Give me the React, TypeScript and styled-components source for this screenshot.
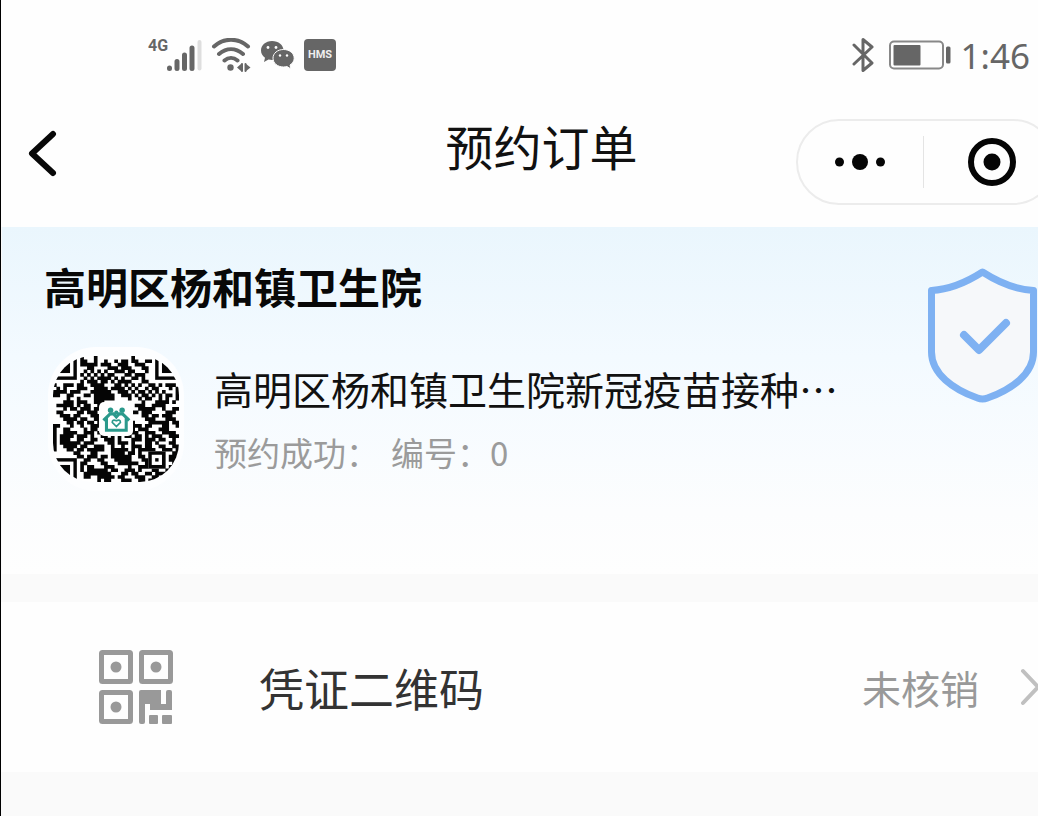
import React from "react";
import styled, { createGlobalStyle } from "styled-components";

const GlobalStyle = createGlobalStyle`
  * { box-sizing: border-box; }
  html, body, #root { min-height: 100%; }
  body {
    margin: 0;
    background: #fafafa;
    font-family: "Noto Sans CJK SC", "Noto Sans", sans-serif;
    color: #111;
    overflow-x: hidden;
  }
  button { font: inherit; color: inherit; background: none; border: 0; padding: 0; cursor: pointer; }
  svg { display: block; flex: none; }
`;

const Screen = styled.div`
  min-height: 100vh;
  border-left: 1px solid #000;
  overflow: hidden;
`;

const StatusBar = styled.header`
  display: flex;
  justify-content: space-between;
  align-items: center;
  height: 110px;
  padding: 0 8px 0 147px;
  background: #fefefe;
  color: #666;
`;

const StatusGroup = styled.div<{ $gap: number }>`
  display: flex;
  align-items: center;
  gap: ${(p) => p.$gap}px;
`;

const Signal = styled.div`
  display: flex;
  align-items: flex-start;
`;

const Network = styled.span`
  width: 18px;
  font: 700 16px/16px Roboto, sans-serif;
`;

const HmsBadge = styled.span`
  display: grid;
  place-items: center;
  width: 32px;
  height: 32px;
  border-radius: 4px;
  background: #666;
  color: #eee;
  font: 700 11px/12px Roboto, sans-serif;
`;

const Clock = styled.time`
  padding-top: 2px;
  font: 400 35px/40px "Noto Sans", sans-serif;
`;

const NavBar = styled.nav`
  display: grid;
  grid-template-columns: 1fr auto 1fr;
  align-items: start;
  height: 117px;
  background: #fefefe;
`;

const BackButton = styled.button`
  justify-self: start;
  padding: 20px 26px;
`;

const PageTitle = styled.h1`
  margin: 0;
  padding-left: 44px;
  font-size: 48px;
  font-weight: 400;
  line-height: 70px;
`;

const Capsule = styled.div`
  justify-self: end;
  display: flex;
  align-items: center;
  width: 260px;
  height: 86px;
  margin: 9px -18px 0 0;
  border: 2px solid #ececec;
  border-radius: 43px;
`;

const CapsuleButton = styled.button`
  display: grid;
  place-items: center;
  flex: 1;
  height: 52px;
  & + & { border-left: 1px solid #e4e4e4; padding-left: 6px; }
`;

const Hero = styled.section`
  display: flex;
  justify-content: space-between;
  align-items: flex-start;
  height: 347px;
  margin-left: 1px;
  padding: 28px 0 0 42px;
  background: linear-gradient(#eaf6fd 0, #f3faff 130px, #fcfdfe 285px, #fefefe);
`;

const ClinicName = styled.h2`
  margin: 0;
  font-size: 42px;
  font-weight: 700;
  line-height: 62px;
  color: #080808;
`;

const Booking = styled.div`
  display: flex;
  align-items: center;
  gap: 30px;
  padding: 30px 0 0 4px;
`;

const QrFrame = styled.div`
  display: grid;
  place-items: center;
  width: 136px;
  height: 144px;
  border-radius: 48px;
  background: #fdfeff;
`;

const BookingTitle = styled.p`
  margin: 0;
  font-size: 39px;
  line-height: 64px;
`;

const BookingStatus = styled.p`
  display: flex;
  gap: 12px;
  margin: 0;
  font-size: 33px;
  line-height: 64px;
  color: #9b9b9b;
`;

const BookingText = styled.div`
  padding-top: 2px;
`;

const ShieldBox = styled.div`
  padding-top: 11px;
`;

const VoucherRow = styled.button`
  display: flex;
  align-items: center;
  width: 100%;
  height: 170px;
  margin-top: 28px;
  padding: 0 0 0 97px;
  background: #fefefe;
  text-align: left;
`;

const VoucherLabel = styled.span`
  flex: 1;
  padding: 2px 0 0 85px;
  font-size: 45px;
  line-height: 66px;
  color: #333;
`;

const VoucherState = styled.span`
  padding-right: 41px;
  font-size: 39px;
  line-height: 58px;
  color: #999;
`;

const QR_ROWS = [
  "0000000010001000000000010000000000000",
  "0000000011001001001011011001100000000",
  "0000000011111011100111001110000000000",
  "0000000000110000111011100011000000000",
  "0000000001010101001110110001000000000",
  "0000000010101010110001101110000000000",
  "0000000001010111101010011010000000000",
  "0000000010111011010111100011000000000",
  "1001110110011110001101010100110101110",
  "0101000111001111011110101001011000101",
  "1111011100011111100111010110101010001",
  "1100110001101111110011101011010101101",
  "0000100100001111110000100101100101001",
  "0001110111001110000000000010001111010",
  "0111110101100100000000001110011110000",
  "0001011011101100000000000111110010011",
  "0110000110111000000000011011100001110",
  "0011101100011110000000000011011011100",
  "0001111011001110000000000001110001110",
  "0000110110110110000000010000111111011",
  "1100010010011100000000011101100011001",
  "1001100001011000000000010111000111000",
  "1001111001110110000000111001110011110",
  "1011110111010011010101101101011100111",
  "1011100110011001110100011101110110010",
  "1011111101110000110111010001101000110",
  "1001111011001110010010011101100110011",
  "1000110110111110011111010111110011101",
  "0000001100011000011110110100111110011",
  "0000000110111011011111100110100010111",
  "0000000001100110001111100011101010110",
  "0000000011000011000111111001100010011",
  "0000000010110001110000100111111110110",
  "0000000010111111011001110100011001100",
  "0000000001111111100011011001101111000",
  "0000000001100111110110001110011010000",
  "0000000000000101100011100110110000000",
];

const QR_PATH = QR_ROWS.map((row, y) =>
  Array.from(row.matchAll(/1+/g), (run) => {
    const w = run[0].length + 0.08;
    return `M${run.index} ${y}h${w}v1.08h-${w}z`;
  }).join("")
).join("");

const FINDERS = [[0, 0], [30, 0], [0, 30]];

function ClinicQr() {
  return (
    <svg width="126" height="126" viewBox="0 0 37 37" role="img" aria-label="二维码">
      <clipPath id="qr-round"><rect width="37" height="37" rx="11.500" /></clipPath>
      <g clipPath="url(#qr-round)">
        <rect width="37" height="37" fill="#fff" />
        <path d={QR_PATH} fill="#050505" />
        {FINDERS.map(([x, y]) => (
          <g key={`${x}-${y}`} transform={`translate(${x} ${y})`}>
            <rect x=".5" y=".5" width="6" height="6" fill="#fff" stroke="#050505" />
            <rect x="2" y="2" width="3" height="3" fill="#050505" />
          </g>
        ))}
        <rect x="28" y="28" width="5" height="5" fill="#fff" />
        <rect x="28.500" y="28.500" width="4" height="4" fill="#fff" stroke="#050505" />
        <rect x="30" y="30" width="1" height="1" fill="#050505" />
        <rect x="13.500" y="13.500" width="10" height="10" rx="1.500" fill="#fff" />
        <g fill="none" stroke="#2b9a8c" strokeWidth=".9">
          <path d="M15.700 18.200v3.600h5.800v-3.600M14.800 18.900l2-1.900h1l.8.900.8-.9h1l2 1.900" />
          <path d="M18.600 20.700l-1.200-1.200q0-1 1.200-.5 1.200-.5 1.200.5z" strokeWidth=".5" />
        </g>
        <g fill="#2b9a8c"><circle cx="16.900" cy="15.900" r=".8" /><circle cx="20.300" cy="15.900" r=".8" /><circle cx="18.600" cy="16.600" r=".6" /></g>
      </g>
    </svg>
  );
}

function SignalBars() {
  return (
    <svg width="36" height="34" viewBox="0 0 36 34" strokeWidth="5" strokeLinecap="round" stroke="#666">
      <path d="M3.500 30v.5M11 23.500v7M18.500 17v13.500M26 10v20.500" />
      <path d="M33.500 4v26.500" stroke="#dedede" strokeWidth="4" />
    </svg>
  );
}

function Wifi() {
  return (
    <svg width="40" height="34" viewBox="0 0 40 34" fill="none" stroke="#666" strokeWidth="4" strokeLinecap="round">
      <path d="M3 8.500C13-.5 27-.5 37 8.500M8 16c7.500-6.500 16.500-6.500 24 0M13.500 22.500c4-3.500 9-3.500 13 0" />
      <circle cx="19.500" cy="29.500" r="3.200" fill="#666" stroke="none" />
      <path d="M26 29.500l4.500-4v8zM39.500 29.500l-5-4v8z" fill="#666" stroke="none" />
      <path d="M31 26v7M34.500 26v7" strokeWidth="2" />
    </svg>
  );
}

function Chat() {
  return (
    <svg width="35" height="30" viewBox="0 0 35 30">
      <path d="M12 1C5.500 1 1 5.300 1 10.500c0 3 1.500 5.500 4 7.200L4 22l4.500-2.500c1.200.3 2.300.5 3.500.5 6.500 0 11.500-4 11.500-9.500S18.500 1 12 1z" fill="#666" />
      <path d="M23.500 9.500c-6 0-10.500 3.800-10.500 8.700s4.500 8.800 10.500 8.800c1.200 0 2.300-.2 3.400-.5L31 29l-1-4c2.600-1.600 4.200-4 4.200-6.800 0-4.900-4.700-8.700-10.700-8.700z" fill="#666" stroke="#fefefe" />
      <g fill="#fefefe"><circle cx="8" cy="7.500" r="1.400" /><circle cx="16" cy="7.500" r="1.400" /><circle cx="20" cy="15.500" r="1.200" /><circle cx="27" cy="15.500" r="1.200" /></g>
    </svg>
  );
}

function Bluetooth() {
  return (
    <svg width="27" height="36" viewBox="0 0 27 36" fill="none" stroke="#666" strokeWidth="3" strokeLinejoin="round" strokeLinecap="round">
      <path d="M2 8l18 18-9 7.500v-31L20 10 2 27" />
    </svg>
  );
}

function Battery() {
  return (
    <svg width="62" height="30" viewBox="0 0 62 30">
      <rect x="1" y="1.500" width="53" height="27" rx="4" fill="none" stroke="#888" strokeWidth="2" />
      <rect x="4.500" y="5" width="27" height="20.500" rx="1" fill="#666" />
      <rect x="57" y="6.500" width="4.500" height="17" rx="1.500" fill="#666" />
    </svg>
  );
}

function Shield() {
  return (
    <svg width="111" height="138" viewBox="0 0 111 138" fill="none" stroke="#7eb1f2" strokeWidth="7" strokeLinecap="round" strokeLinejoin="round">
      <path d="M55.500 6C40 16 22 23.500 4.500 24.500V86c0 22 22 37.500 46 46q5 2 10 0c24-8.500 46-24 46-46V24.500C89 23.500 71 16 55.500 6z" fill="#f6f8fa" />
      <path d="M37 69l15 15 27-27" strokeWidth="8" />
    </svg>
  );
}

function VoucherIcon() {
  return (
    <svg width="76" height="76" viewBox="0 0 76 76" fill="#999">
      {[[0, 0], [40, 0], [0, 40]].map(([x, y]) => (
        <g key={`${x}-${y}`} transform={`translate(${x} ${y})`}>
          <rect x="3.500" y="3.500" width="29" height="29" rx="1" fill="none" stroke="#999" strokeWidth="5" />
          <circle cx="18" cy="18" r="5.500" />
        </g>
      ))}
      <path d="M43 41h20v14h5V43q0-2 2-2h2q2 0 2 2v18H52v-6h-5v18q0 2-2 2h-2q-2 0-2-2V43q0-2 2-2z" />
      <rect x="51" y="66" width="9" height="9" rx="1" />
      <rect x="64" y="66" width="10" height="9" rx="1" />
    </svg>
  );
}

export default function App() {
  return (
    <Screen>
      <GlobalStyle />
      <StatusBar>
        <StatusGroup $gap={9}>
          <Signal>
            <Network>4G</Network>
            <SignalBars />
          </Signal>
          <Wifi />
          <Chat />
          <HmsBadge>HMS</HmsBadge>
        </StatusGroup>
        <StatusGroup $gap={10}>
          <Bluetooth />
          <Battery />
          <Clock>1:46</Clock>
        </StatusGroup>
      </StatusBar>
      <NavBar>
        <BackButton aria-label="返回">
          <svg width="30" height="48" viewBox="0 0 30 48" fill="none" stroke="#080808" strokeWidth="6" strokeLinecap="round" strokeLinejoin="round">
            <path d="M26 4L5 23.500 26 43" />
          </svg>
        </BackButton>
        <PageTitle>预约订单</PageTitle>
        <Capsule>
          <CapsuleButton aria-label="更多">
            <svg width="52" height="18" viewBox="0 0 52 18" fill="#050505">
              <circle cx="5.500" cy="9" r="4.500" />
              <circle cx="26" cy="9" r="8" />
              <circle cx="46.500" cy="9" r="4.500" />
            </svg>
          </CapsuleButton>
          <CapsuleButton aria-label="关闭">
            <svg width="48" height="48" viewBox="0 0 48 48">
              <circle cx="24" cy="24" r="21" fill="none" stroke="#050505" strokeWidth="6" />
              <circle cx="24" cy="24" r="8.500" fill="#050505" />
            </svg>
          </CapsuleButton>
        </Capsule>
      </NavBar>
      <main>
        <Hero>
          <div>
            <ClinicName>高明区杨和镇卫生院</ClinicName>
            <Booking>
              <QrFrame><ClinicQr /></QrFrame>
              <BookingText>
                <BookingTitle>高明区杨和镇卫生院新冠疫苗接种…</BookingTitle>
                <BookingStatus><span>预约成功：</span><span>编号：0</span></BookingStatus>
              </BookingText>
            </Booking>
          </div>
          <ShieldBox><Shield /></ShieldBox>
        </Hero>
        <VoucherRow>
          <VoucherIcon />
          <VoucherLabel>凭证二维码</VoucherLabel>
          <VoucherState>未核销</VoucherState>
          <svg width="18" height="38" viewBox="0 0 18 38" fill="none" stroke="#c0c0c0" strokeWidth="4" strokeLinecap="round">
            <path d="M3 3l15 16L3 35" />
          </svg>
        </VoucherRow>
      </main>
    </Screen>
  );
}
